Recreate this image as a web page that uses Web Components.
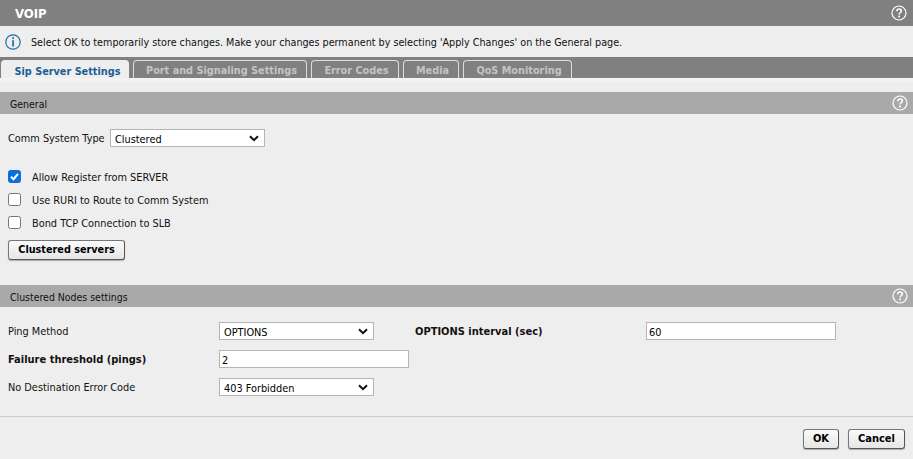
<!DOCTYPE html>
<html><head><meta charset="utf-8"><style>
html,body{margin:0;padding:0;background:#eee;height:100%;overflow:hidden}
body{font:11px "DejaVu Sans",sans-serif;color:#000}
</style></head><body>
<voip-app></voip-app>
<script>
const FONT='"DejaVu Sans Condensed","DejaVu Sans",sans-serif';
const help=(c='#fff')=>`<svg width="16" height="16" viewBox="0 0 16 16"><circle cx="8" cy="8" r="7" fill="none" stroke="${c}" stroke-width="1.2"/><path d="M5.8 6.2C5.9 4.8 6.9 4 8.1 4c1.3 0 2.2.8 2.2 1.9 0 1.8-2.2 1.9-2.2 3.6" fill="none" stroke="${c}" stroke-width="1.6"/><rect x="7.2" y="10.6" width="1.8" height="1.8" fill="${c}"/></svg>`;
function def(name,css,html){customElements.define(name,class extends HTMLElement{constructor(){super();this.attachShadow({mode:'open'}).innerHTML=`<style>${css}</style>${typeof html==='function'?html(this):html}`}})}
def('sec-bar',`:host{display:flex;align-items:center;justify-content:space-between;box-sizing:border-box;height:22px;background:#a9a9a9;padding:0 5px 0 10px;font:10.45px ${FONT};color:#111}span{padding-top:2px}svg{display:block}`,`<span><slot></slot></span>${help()}`);
def('ui-tab',`:host{display:block;box-sizing:border-box;height:18px;margin-top:3px;padding:1px 0 0 3px;border:1px solid #ddd;border-bottom:0;border-radius:4px 4px 0 0;background:#808080;color:#c4c4c4;font:bold 10.8px/17px ${FONT};text-align:center;white-space:nowrap}
:host([active]){background:#eee;border-color:#eee;color:#1b5e94;height:21px;line-height:19px;padding-left:5px}`,`<slot></slot>`);
def('ui-btn',`:host{display:inline-block;box-sizing:border-box;height:20px;border:1px solid #777;border-bottom-color:#555;border-right-color:#555;border-radius:3px;background:linear-gradient(#fafafa,#e6e6e6);box-shadow:0 1px 1px #aaa;font:bold 10.75px/18px ${FONT};color:#000;text-align:center;white-space:nowrap}`,`<slot></slot>`);
def('ui-select',`:host{display:flex;align-items:center;justify-content:space-between;box-sizing:border-box;height:18px;background:#fff;border:1px solid #b5b5b5;padding:0 5px 0 4px;font:10.85px ${FONT};color:#000}span{padding-top:2px}svg{display:block}`,`<span><slot></slot></span><svg width="10" height="7" viewBox="0 0 10 7"><path d="M1 1.2L5 5.2L9 1.2" fill="none" stroke="#111" stroke-width="2"/></svg>`);
def('ui-input',`:host{display:flex;align-items:center;box-sizing:border-box;height:18px;background:#fff;border:1px solid #b5b5b5;padding:2px 2px 0;font:10.85px ${FONT};color:#000}`,`<slot></slot>`);
def('ui-check',`:host{display:flex;align-items:center;height:23px;font:10.85px ${FONT};color:#111}
.b{box-sizing:border-box;width:13px;height:13px;border:1px solid #767676;border-radius:2.5px;background:#fff;margin-right:11px;display:flex}
:host([checked]) .b{background:#0a6fd8;border-color:#0a6fd8}svg{display:none}:host([checked]) svg{display:block}.t{padding-top:1px}`,`<span class="b"><svg width="11" height="11" viewBox="0 0 11 11"><path d="M2 5.8L4.5 8.2L9 2.8" fill="none" stroke="#fff" stroke-width="2"/></svg></span><span class="t"><slot></slot></span>`);
def('voip-app',`:host{display:flex;flex-direction:column;width:913px;height:459px;background:#eee;font:10.85px ${FONT};color:#111}
*{box-sizing:border-box}
.top{height:26px;background:#808080;display:flex;align-items:center;justify-content:space-between;padding:0 6px 0 15px;color:#fff;font:bold 13px ${FONT}}
.info{height:31px;display:flex;align-items:center;padding-left:5px;gap:10px;color:#111;font-size:10.7px}
.info span{padding-top:1px}
.tabs{height:21px;background:#808080;display:flex;gap:4px;padding-left:1px}
.strip{height:4px;background:#f3f3f3}.gap{height:10px}
.gen{height:171px;padding:15px 8px 0;display:flex;flex-direction:column}
.row{display:flex;align-items:center}
.row span,.grid>span{padding-top:1px}
.grid{height:109px;display:grid;grid-template-columns:211px 196px 231px 190px;grid-auto-rows:18px;row-gap:10px;padding:15px 0 0 8px;align-items:center}
.grid>span.b{font:bold 11px ${FONT};padding-top:1px}
.foot{flex:1;border-top:1px solid #ccc;display:flex;justify-content:flex-end;align-items:flex-start;gap:9px;padding:12px 8px 0 0}
.foot ui-btn{font-size:11px}
svg{display:block}`,`
<div class="top"><span>VOIP</span>${help()}</div>
<div class="info"><svg width="16" height="16" viewBox="0 0 16 16"><circle cx="8" cy="8" r="7.2" fill="none" stroke="#1b6ea8" stroke-width="1.2"/><rect x="7.2" y="3.2" width="1.7" height="1.8" fill="#1b6ea8"/><rect x="7.2" y="6.2" width="1.7" height="6.3" fill="#1b6ea8"/></svg><span>Select OK to temporarily store changes. Make your changes permanent by selecting 'Apply Changes' on the General page.</span></div>
<div class="tabs"><ui-tab active style="width:128px">Sip Server Settings</ui-tab><ui-tab style="width:174px">Port and Signaling Settings</ui-tab><ui-tab style="width:88px">Error Codes</ui-tab><ui-tab style="width:56px">Media</ui-tab><ui-tab style="width:109px">QoS Monitoring</ui-tab></div>
<div class="strip"></div><div class="gap"></div>
<sec-bar>General</sec-bar>
<div class="gen">
<div class="row" style="height:18px;margin-bottom:18px"><span style="width:102px">Comm System Type</span><ui-select style="width:155px">Clustered</ui-select></div>
<ui-check checked>Allow Register from SERVER</ui-check><ui-check>Use RURI to Route to Comm System</ui-check><ui-check>Bond TCP Connection to SLB</ui-check>
<ui-btn style="width:117px;margin-top:6px">Clustered servers</ui-btn>
</div>
<sec-bar>Clustered Nodes settings</sec-bar>
<div class="grid">
<span>Ping Method</span><ui-select style="width:155px">OPTIONS</ui-select><span class="b">OPTIONS interval (sec)</span><ui-input>60</ui-input>
<span class="b">Failure threshold (pings)</span><ui-input style="width:190px">2</ui-input><span></span><span></span>
<span>No Destination Error Code</span><ui-select style="width:155px">403 Forbidden</ui-select><span></span><span></span>
</div>
<div class="foot"><ui-btn style="width:36px">OK</ui-btn><ui-btn style="width:57px">Cancel</ui-btn></div>
`);
</script></body></html>
